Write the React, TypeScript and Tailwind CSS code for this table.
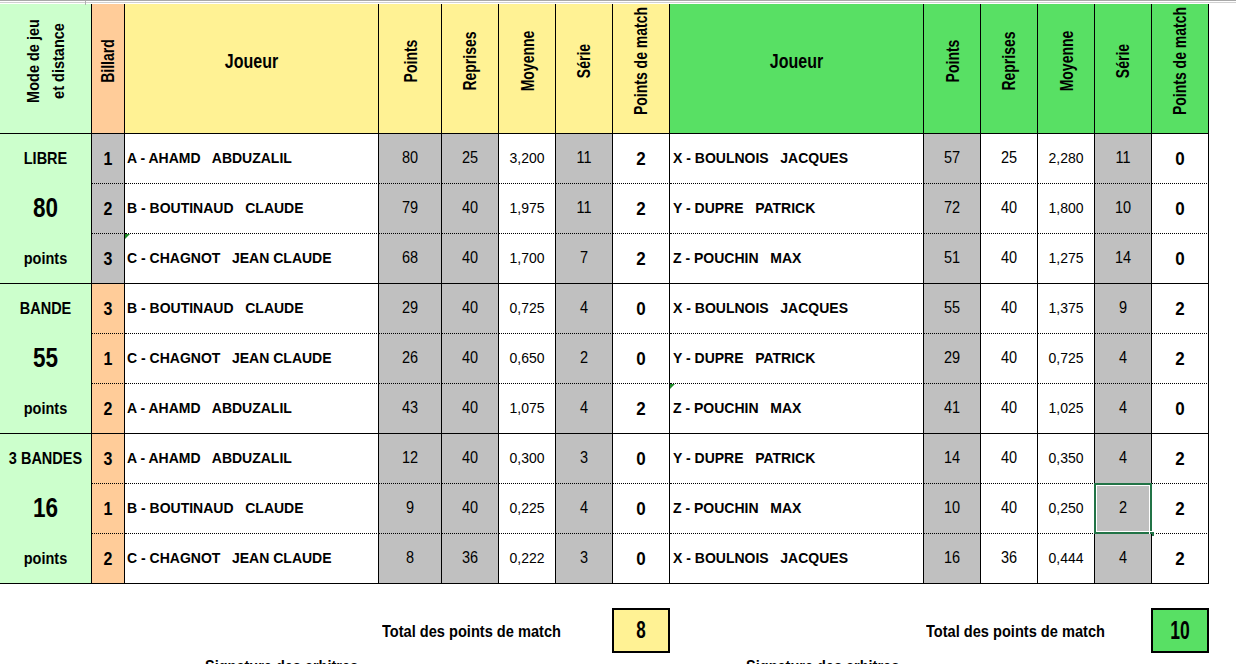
import React from "react";

type Row = {
  b: string;
  n1: string;
  p1: string;
  r1: string;
  m1: string;
  s1: string;
  pm1: string;
  n2: string;
  p2: string;
  r2: string;
  m2: string;
  s2: string;
  pm2: string;
};

type Group = {
  mode: string;
  dist: string;
  billardBg: string;
  rows: Row[];
};

const groups: Group[] = [
  {
    mode: "LIBRE",
    dist: "80",
    billardBg: "bg-[#c0c0c0]",
    rows: [
      { b: "1", n1: "A - AHAMD   ABDUZALIL", p1: "80", r1: "25", m1: "3,200", s1: "11", pm1: "2", n2: "X - BOULNOIS   JACQUES", p2: "57", r2: "25", m2: "2,280", s2: "11", pm2: "0" },
      { b: "2", n1: "B - BOUTINAUD   CLAUDE", p1: "79", r1: "40", m1: "1,975", s1: "11", pm1: "2", n2: "Y - DUPRE   PATRICK", p2: "72", r2: "40", m2: "1,800", s2: "10", pm2: "0" },
      { b: "3", n1: "C - CHAGNOT   JEAN CLAUDE", p1: "68", r1: "40", m1: "1,700", s1: "7", pm1: "2", n2: "Z - POUCHIN   MAX", p2: "51", r2: "40", m2: "1,275", s2: "14", pm2: "0" },
    ],
  },
  {
    mode: "BANDE",
    dist: "55",
    billardBg: "bg-[#ffcc99]",
    rows: [
      { b: "3", n1: "B - BOUTINAUD   CLAUDE", p1: "29", r1: "40", m1: "0,725", s1: "4", pm1: "0", n2: "X - BOULNOIS   JACQUES", p2: "55", r2: "40", m2: "1,375", s2: "9", pm2: "2" },
      { b: "1", n1: "C - CHAGNOT   JEAN CLAUDE", p1: "26", r1: "40", m1: "0,650", s1: "2", pm1: "0", n2: "Y - DUPRE   PATRICK", p2: "29", r2: "40", m2: "0,725", s2: "4", pm2: "2" },
      { b: "2", n1: "A - AHAMD   ABDUZALIL", p1: "43", r1: "40", m1: "1,075", s1: "4", pm1: "2", n2: "Z - POUCHIN   MAX", p2: "41", r2: "40", m2: "1,025", s2: "4", pm2: "0" },
    ],
  },
  {
    mode: "3 BANDES",
    dist: "16",
    billardBg: "bg-[#ffcc99]",
    rows: [
      { b: "3", n1: "A - AHAMD   ABDUZALIL", p1: "12", r1: "40", m1: "0,300", s1: "3", pm1: "0", n2: "Y - DUPRE   PATRICK", p2: "14", r2: "40", m2: "0,350", s2: "4", pm2: "2" },
      { b: "1", n1: "B - BOUTINAUD   CLAUDE", p1: "9", r1: "40", m1: "0,225", s1: "4", pm1: "0", n2: "Z - POUCHIN   MAX", p2: "10", r2: "40", m2: "0,250", s2: "2", pm2: "2" },
      { b: "2", n1: "C - CHAGNOT   JEAN CLAUDE", p1: "8", r1: "36", m1: "0,222", s1: "3", pm1: "0", n2: "X - BOULNOIS   JACQUES", p2: "16", r2: "36", m2: "0,444", s2: "4", pm2: "2" },
    ],
  },
];

const COLS =
  "grid grid-cols-[92px_33px_254px_63px_57px_57px_57px_57px_254px_57px_57px_57px_57px_57px]";

function VHead({ label, bg }: { label: string; bg: string }) {
  return (
    <div className={`${bg} border-r border-b border-black flex items-center justify-center pb-[15px]`}>
      <span className="block -rotate-90 scale-y-[1.27] whitespace-nowrap font-bold text-[14px] leading-[16px]">
        {label}
      </span>
    </div>
  );
}

function Triangle() {
  return (
    <span className="absolute left-0 top-0 w-0 h-0 border-t-[5px] border-t-[#1f8a2a] border-r-[5px] border-r-transparent" />
  );
}

export default function App() {
  const yellow = "bg-[#fff294]";
  const green = "bg-[#58e064]";
  return (
    <div className="w-[1236px] h-[664px] overflow-hidden bg-white text-black font-['Liberation_Sans',Arial,sans-serif]">
      {/* top spreadsheet edge */}
      <div className="relative h-[4px] border-t border-[#a8a8a8]">
        <div className="h-px mt-[1px] bg-[#d0d0d0]" />
        <div className="absolute left-[85px] top-0 h-[4px] w-px bg-[#b0b0b0]" />
      </div>

      <div className={`${COLS} grid-rows-[130px_repeat(9,50px)] w-[1209px]`}>
        {/* header */}
        <div className="bg-[#ccffcc] border-r border-b border-black flex items-center justify-center pb-[15px]">
          <span className="block -rotate-90 scale-y-[1.2] whitespace-nowrap font-bold text-[14.5px] leading-[21px] text-center">
            Mode de jeu
            <br />
            et distance
          </span>
        </div>
        <VHead label="Billard" bg="bg-[#ffcc99]" />
        <div className={`${yellow} border-r border-b border-black flex items-center justify-center pb-[15px]`}>
          <span className="block scale-y-[1.3] font-bold text-[16px]">Joueur</span>
        </div>
        <VHead label="Points" bg="bg-[#fff294]" />
        <VHead label="Reprises" bg="bg-[#fff294]" />
        <VHead label="Moyenne" bg="bg-[#fff294]" />
        <VHead label="Série" bg="bg-[#fff294]" />
        <VHead label="Points de match" bg="bg-[#fff294]" />
        <div className={`${green} border-r border-b border-black flex items-center justify-center pb-[15px]`}>
          <span className="block scale-y-[1.3] font-bold text-[16px]">Joueur</span>
        </div>
        <VHead label="Points" bg="bg-[#58e064]" />
        <VHead label="Reprises" bg="bg-[#58e064]" />
        <VHead label="Moyenne" bg="bg-[#58e064]" />
        <VHead label="Série" bg="bg-[#58e064]" />
        <VHead label="Points de match" bg="bg-[#58e064]" />

        {/* body */}
        {groups.map((g, gi) => (
          <React.Fragment key={gi}>
            <div className="row-span-3 bg-[#ccffcc] border-r border-b border-black flex flex-col font-bold">
              <div className="h-[50px] flex items-center justify-center">
                <span className="block scale-y-[1.15] text-[14.5px]">{g.mode}</span>
              </div>
              <div className="h-[50px] flex items-center justify-center">
                <span className="block scale-y-[1.2] text-[22.5px]">{g.dist}</span>
              </div>
              <div className="h-[49px] flex items-center justify-center">
                <span className="block scale-y-[1.15] text-[14.5px]">points</span>
              </div>
            </div>
            {g.rows.map((r, ri) => {
              const bb =
                ri < 2
                  ? "border-r border-b border-black [border-bottom-style:dotted]"
                  : "border-r border-b border-black";
              const num = `${bb} flex items-center justify-center text-[14.5px]`;
              const gray = "bg-[#c0c0c0]";
              const showTri1 = gi === 0 && ri === 2;
              const showTri2 = gi === 1 && ri === 2;
              const selected = gi === 2 && ri === 1;
              return (
                <React.Fragment key={ri}>
                  <div className={`${g.billardBg} ${bb} flex items-center justify-center`}>
                    <span className="block scale-y-[1.12] font-bold text-[16px]">{r.b}</span>
                  </div>
                  <div className={`${bb} relative flex items-center pl-[2px]`}>
                    {showTri1 && <Triangle />}
                    <span className="whitespace-pre font-bold text-[14px]">{r.n1}</span>
                  </div>
                  <div className={`${num} ${gray}`}>
                    <span className="block scale-y-[1.08]">{r.p1}</span>
                  </div>
                  <div className={`${num} ${gray}`}>
                    <span className="block scale-y-[1.08]">{r.r1}</span>
                  </div>
                  <div className={`${bb} flex items-center justify-center text-[14px]`}>{r.m1}</div>
                  <div className={`${num} ${gray}`}>
                    <span className="block scale-y-[1.08]">{r.s1}</span>
                  </div>
                  <div className={`${bb} flex items-center justify-center`}>
                    <span className="block scale-y-[1.1] font-bold text-[17px]">{r.pm1}</span>
                  </div>
                  <div className={`${bb} relative flex items-center pl-[3px]`}>
                    {showTri2 && <Triangle />}
                    <span className="whitespace-pre font-bold text-[14px]">{r.n2}</span>
                  </div>
                  <div className={`${num} ${gray}`}>
                    <span className="block scale-y-[1.08]">{r.p2}</span>
                  </div>
                  <div className={num}>
                    <span className="block scale-y-[1.08]">{r.r2}</span>
                  </div>
                  <div className={`${bb} flex items-center justify-center text-[14px]`}>{r.m2}</div>
                  <div className={`${num} ${gray} relative`}>
                    <span className="block scale-y-[1.08]">{r.s2}</span>
                    {selected && (
                      <>
                        <span className="absolute left-[-1px] top-[-1px] right-[-1px] bottom-[-1px] border-2 border-[#217346]">
                          <span className="absolute inset-0 border border-white" />
                        </span>
                        <span className="absolute right-[-4px] bottom-[-4px] w-[6px] h-[6px] bg-[#217346] border border-white" />
                      </>
                    )}
                  </div>
                  <div className={`${bb} flex items-center justify-center`}>
                    <span className="block scale-y-[1.1] font-bold text-[17px]">{r.pm2}</span>
                  </div>
                </React.Fragment>
              );
            })}
          </React.Fragment>
        ))}
      </div>

      {/* totals */}
      <div className={`${COLS} w-[1209px] mt-[24px] h-[45px]`}>
        <div className="col-start-4 col-span-4 flex items-center pl-[3px] pt-[2px]">
          <span className="block scale-y-[1.17] font-bold text-[14.6px] whitespace-nowrap">Total des points de match</span>
        </div>
        <div className="col-start-8 -ml-px bg-[#fff294] border-2 border-black flex items-center justify-center">
          <span className="block scale-y-[1.45] font-bold text-[17px]">8</span>
        </div>
        <div className="col-start-10 col-span-4 flex items-center pl-[2px] pt-[2px]">
          <span className="block scale-y-[1.17] font-bold text-[14.6px] whitespace-nowrap">Total des points de match</span>
        </div>
        <div className="col-start-14 -ml-px bg-[#58e064] border-2 border-black flex items-center justify-center">
          <span className="block scale-y-[1.45] font-bold text-[17.5px]">10</span>
        </div>
      </div>

      {/* signatures */}
      <div className="flex mt-[4px] h-[20px] font-bold text-[14.5px] leading-[17px]">
        <span className="block ml-[205px] scale-y-[1.17] origin-top whitespace-nowrap">Signature des arbitres</span>
        <span className="block ml-[388px] scale-y-[1.17] origin-top whitespace-nowrap">Signature des arbitres</span>
      </div>
    </div>
  );
}
